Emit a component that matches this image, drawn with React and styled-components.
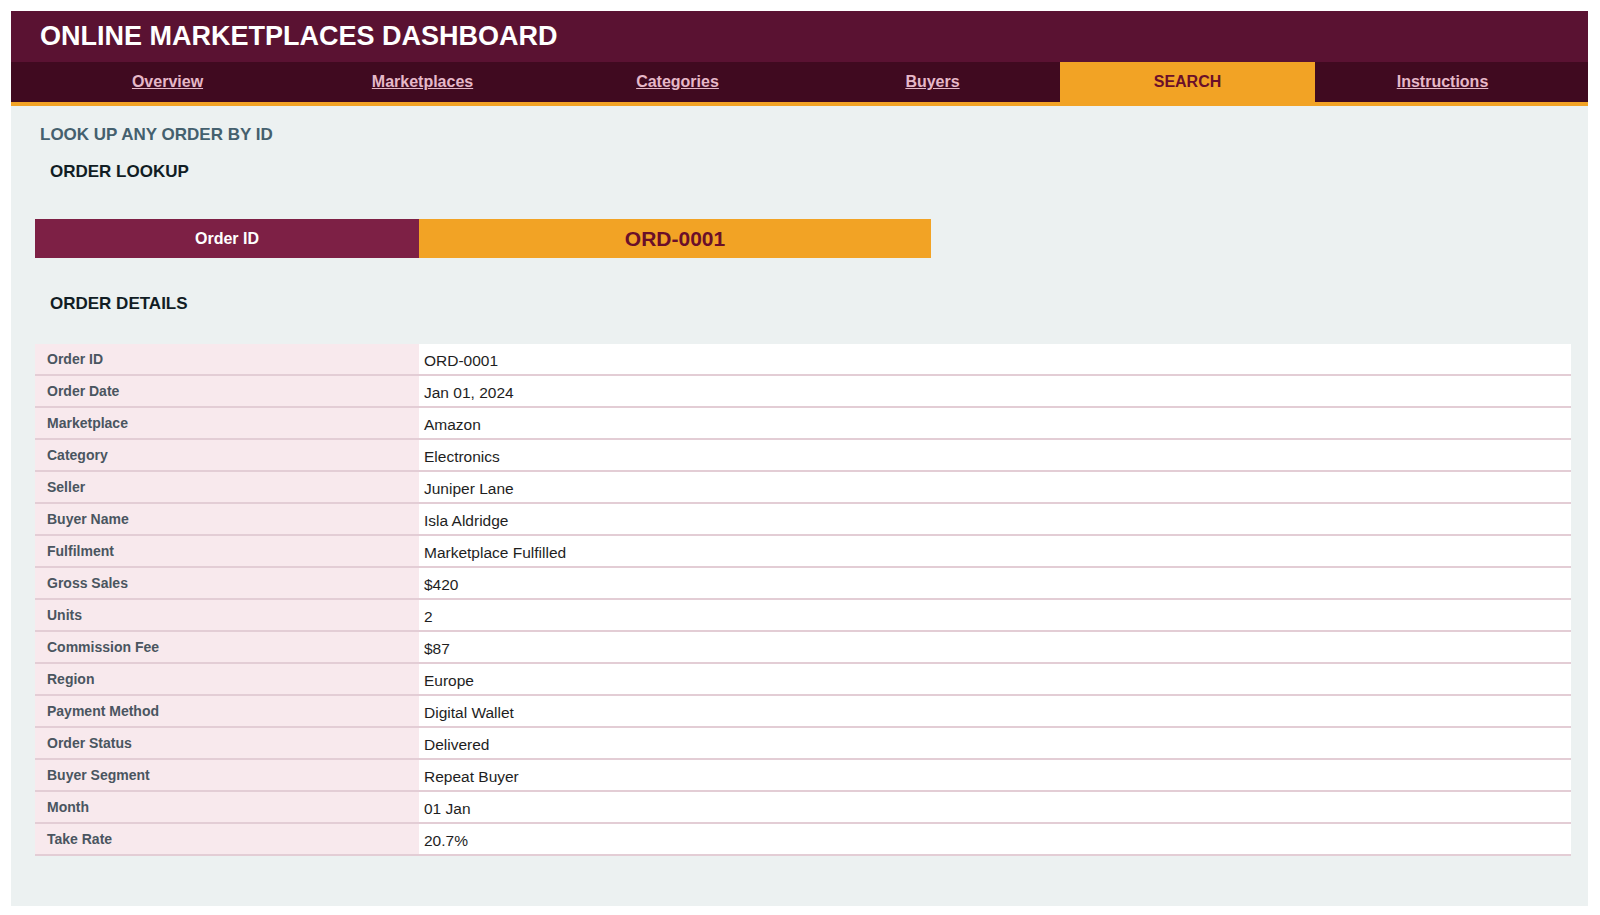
import React from 'react'
import styled, { createGlobalStyle } from 'styled-components'

const Global = createGlobalStyle`
  body { margin: 0; background: #fff; font-family: 'Liberation Sans', Arial, sans-serif; }
`

const Frame = styled.div`
  margin: 11px 12px 0 11px;
  background: #ecf1f1;
  min-height: 891px;
  box-sizing: border-box;
`
const TitleBar = styled.div`
  background: #5a1232;
  height: 51px;
  display: flex;
  align-items: center;
  padding-left: 29px;
  color: #fff;
  font-size: 27px;
  font-weight: 700;
`
const Nav = styled.nav`
  background: #400a20;
  border-bottom: 4px solid #f2a325;
  display: flex;
  padding: 0 18px 0 29px;
  height: 40px;
`
const Tab = styled.a`
  width: 255px;
  display: flex;
  align-items: center;
  justify-content: center;
  font-size: 16px;
  font-weight: 700;
  color: ${({ active }) => (active ? '#6a0f2a' : '#e6b8c8')};
  background: ${({ active }) => (active ? '#f2a325' : 'transparent')};
  text-decoration: ${({ active }) => (active ? 'none' : 'underline')};
`
const Body = styled.div`
  padding: 19px 17px 50px 24px;
`
const Lead = styled.div`
  color: #44606e;
  font-size: 17px;
  font-weight: 700;
  padding-left: 5px;
  line-height: 19px;
`
const Section = styled.div`
  color: #111d24;
  font-size: 17px;
  font-weight: 700;
  padding-left: 15px;
  line-height: 19px;
  margin-top: ${({ top }) => top}px;
`
const Lookup = styled.div`
  display: flex;
  width: 896px;
  height: 39px;
  margin-top: 38px;
`
const LookupLabel = styled.div`
  width: 384px;
  background: #7d2045;
  color: #fff;
  font-size: 16px;
  font-weight: 700;
  display: flex;
  align-items: center;
  justify-content: center;
`
const LookupValue = styled.div`
  flex: 1;
  background: #f2a325;
  color: #6a0f2a;
  font-size: 21px;
  font-weight: 700;
  display: flex;
  align-items: center;
  justify-content: center;
`
const Table = styled.div`
  margin-top: 31px;
`
const Row = styled.div`
  display: flex;
  height: 32px;
  border-bottom: 2px solid #e3cdd5;
  box-sizing: border-box;
`
const Key = styled.div`
  width: 384px;
  background: #f8e9ed;
  color: #4a5560;
  font-size: 14px;
  font-weight: 700;
  padding: 7px 0 0 12px;
  box-sizing: border-box;
`
const Val = styled.div`
  flex: 1;
  background: #fff;
  color: #1e1e1e;
  font-size: 15.5px;
  padding: 8px 0 0 5px;
`

const rows = [
  ['Order ID', 'ORD-0001'],
  ['Order Date', 'Jan 01, 2024'],
  ['Marketplace', 'Amazon'],
  ['Category', 'Electronics'],
  ['Seller', 'Juniper Lane'],
  ['Buyer Name', 'Isla Aldridge'],
  ['Fulfilment', 'Marketplace Fulfilled'],
  ['Gross Sales', '$420'],
  ['Units', '2'],
  ['Commission Fee', '$87'],
  ['Region', 'Europe'],
  ['Payment Method', 'Digital Wallet'],
  ['Order Status', 'Delivered'],
  ['Buyer Segment', 'Repeat Buyer'],
  ['Month', '01 Jan'],
  ['Take Rate', '20.7%'],
]

const tabs = ['Overview', 'Marketplaces', 'Categories', 'Buyers', 'SEARCH', 'Instructions']

export default function App() {
  return (
    <>
      <Global />
      <Frame>
        <TitleBar>ONLINE MARKETPLACES DASHBOARD</TitleBar>
        <Nav>
          {tabs.map(t => (
            <Tab key={t} active={t === 'SEARCH'}>{t}</Tab>
          ))}
        </Nav>
        <Body>
          <Lead>LOOK UP ANY ORDER BY ID</Lead>
          <Section top={18}>ORDER LOOKUP</Section>
          <Lookup>
            <LookupLabel>Order ID</LookupLabel>
            <LookupValue>ORD-0001</LookupValue>
          </Lookup>
          <Section top={36}>ORDER DETAILS</Section>
          <Table>
            {rows.map(([k, v]) => (
              <Row key={k}>
                <Key>{k}</Key>
                <Val>{v}</Val>
              </Row>
            ))}
          </Table>
        </Body>
      </Frame>
    </>
  )
}
